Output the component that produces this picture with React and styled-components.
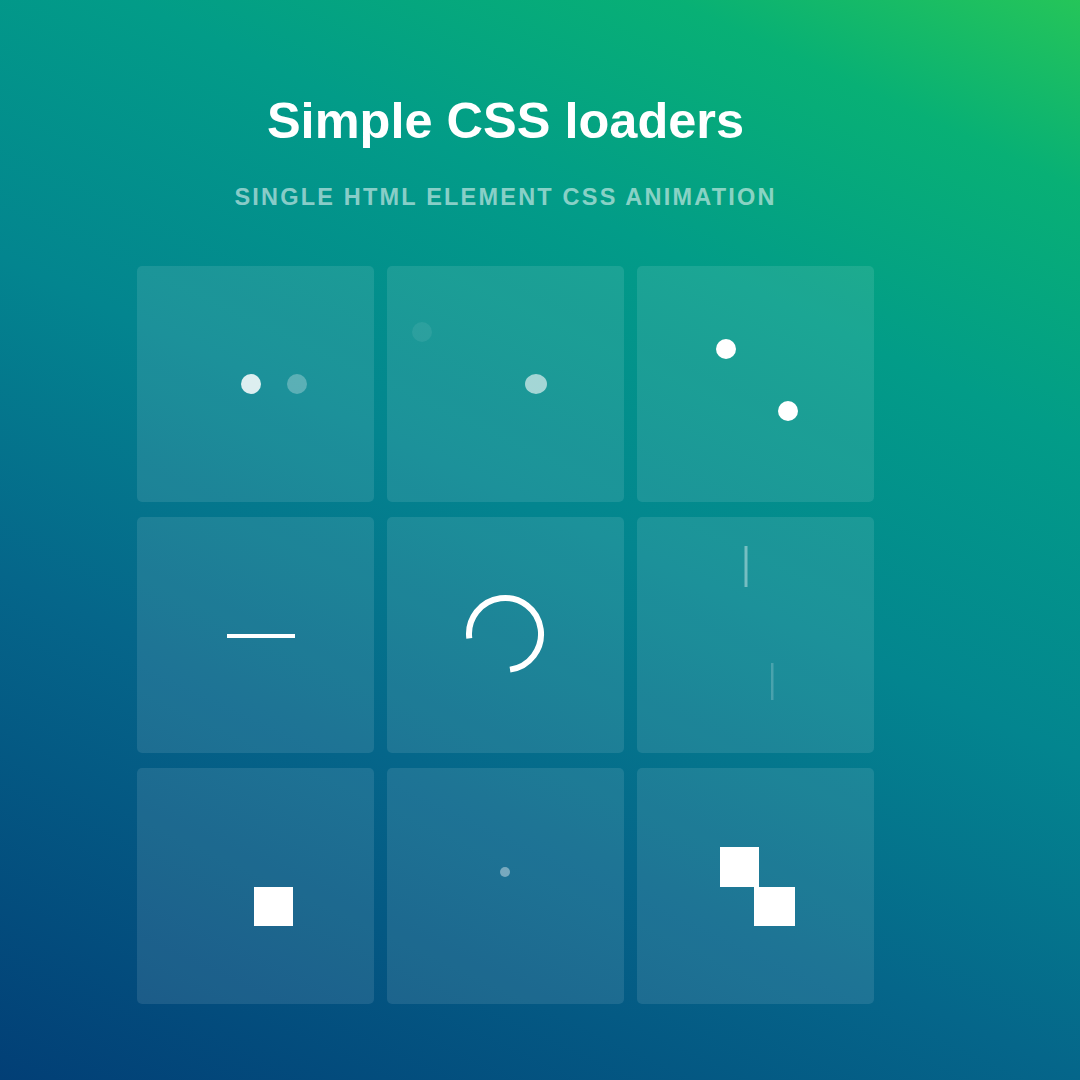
import React from 'react';
import styled, { createGlobalStyle } from 'styled-components';

const GlobalStyle = createGlobalStyle`
  html, body {
    margin: 0;
    padding: 0;
  }
  body {
    font-family: "Liberation Sans", Arial, sans-serif;
  }
`;

const Page = styled.div`
  width: 1080px;
  height: 1080px;
  overflow: hidden;
  background: linear-gradient(
    25deg,
    #023f76 0%,
    #05668a 32%,
    #03858f 52%,
    #029c88 72%,
    #08b075 88%,
    #25c559 100%
  );
`;

const Container = styled.div`
  width: 737px;
  margin-left: 137px;
  padding-top: 96px;
`;

const Title = styled.h1`
  margin: 0;
  font-size: 50.5px;
  line-height: 1;
  font-weight: 700;
  color: #fff;
  text-align: center;
`;

const Subtitle = styled.p`
  margin: 39px 0 0;
  font-size: 23.5px;
  line-height: 1;
  font-weight: 700;
  letter-spacing: 2.2px;
  color: rgba(255, 255, 255, 0.55);
  text-align: center;
  text-transform: uppercase;
`;

const Grid = styled.div`
  margin-top: 57px;
  display: grid;
  grid-template-columns: repeat(3, 237px);
  grid-auto-rows: 236px;
  column-gap: 13px;
  row-gap: 15px;
`;

const Cell = styled.div`
  background: rgba(255, 255, 255, 0.1);
  border-radius: 5px;
  overflow: hidden;
`;

const Canvas = styled.svg`
  display: block;
  width: 100%;
  height: 100%;
`;

const loaders = [
  <>
    <circle cx="114" cy="118" r="10" fill="#fff" opacity="0.85" />
    <circle cx="160" cy="118" r="10" fill="#fff" opacity="0.28" />
  </>,
  <>
    <circle cx="35" cy="66" r="10" fill="#fff" opacity="0.07" />
    <ellipse cx="149" cy="118" rx="11" ry="10" fill="#fff" opacity="0.6" />
  </>,
  <>
    <circle cx="89" cy="83" r="10" fill="#fff" />
    <circle cx="151" cy="145" r="10" fill="#fff" />
  </>,
  <rect x="90" y="117" width="68" height="4" fill="#fff" />,
  <path
    d="M 82.3 121.4 A 36 36 0 1 1 123 152.6"
    fill="none"
    stroke="#fff"
    strokeWidth="6"
  />,
  <>
    <rect x="107.5" y="29" width="3" height="41" fill="#fff" opacity="0.4" />
    <rect x="134" y="146" width="2.5" height="37" fill="#fff" opacity="0.2" />
  </>,
  <rect x="117" y="119" width="39" height="39" fill="#fff" />,
  <circle cx="118" cy="104" r="5" fill="#fff" opacity="0.4" />,
  <>
    <rect x="83" y="79" width="39" height="40" fill="#fff" />
    <rect x="117" y="119" width="41" height="39" fill="#fff" />
  </>,
];

function App() {
  return (
    <Page>
      <GlobalStyle />
      <Container>
        <Title>Simple CSS loaders</Title>
        <Subtitle>Single HTML element CSS animation</Subtitle>
        <Grid>
          {loaders.map((shape, i) => (
            <Cell key={i}>
              <Canvas viewBox="0 0 237 236">{shape}</Canvas>
            </Cell>
          ))}
        </Grid>
      </Container>
    </Page>
  );
}

export default App;
